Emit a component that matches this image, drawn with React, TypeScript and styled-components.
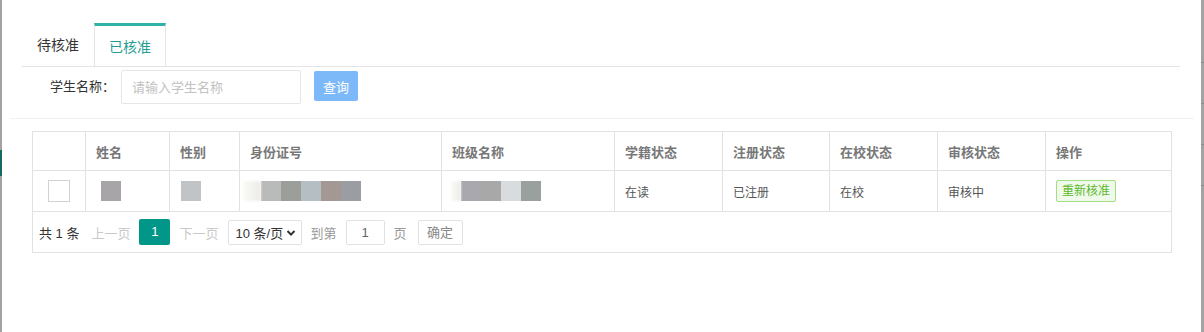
import React from 'react';
import styled, { createGlobalStyle } from 'styled-components';

const GlobalStyle = createGlobalStyle`
  html, body {
    margin: 0;
    padding: 0;
    background: #fff;
  }
  body {
    font-family: 'Liberation Sans', 'Noto Sans CJK SC', sans-serif;
    color: #333;
  }
  * {
    box-sizing: border-box;
  }
`;

interface Student {
  name: string[];
  gender: string[];
  idCard: string[];
  className: string[];
  enrollStatus: string;
  registerStatus: string;
  schoolStatus: string;
  auditStatus: string;
}

const columns = ['', '姓名', '性别', '身份证号', '班级名称', '学籍状态', '注册状态', '在校状态', '审核状态', '操作'];

const students: Student[] = [
  {
    name: ['#a8a5a9'],
    gender: ['#c0c4c6'],
    idCard: ['#b9bbba', '#9c9f99', '#b4bec3', '#a39893', '#9a9da1'],
    className: ['#a9a8ae', '#a8a8a8', '#d9dcde', '#9aa09e'],
    enrollStatus: '在读',
    registerStatus: '已注册',
    schoolStatus: '在校',
    auditStatus: '审核中',
  },
];

const Redacted = ({ colors, lead = 0, offset = 0 }: { colors: string[]; lead?: number; offset?: number }) => {
  return (
    <BlockGroup $offset={offset}>
      {lead > 0 && <FadedBlock $width={lead} />}
      {colors.map((c, i) => (
        <Block key={i} $color={c} />
      ))}
    </BlockGroup>
  );
};

const ChevronDown = () => (
  <svg width="10" height="8" viewBox="0 0 10 8">
    <path d="M1.5 2 L5 5.6 L8.5 2" fill="none" stroke="#333" strokeWidth="2" />
  </svg>
);

const App = () => {
  return (
    <Page>
      <GlobalStyle />
      <LeftRail>
        <RailMark />
      </LeftRail>
      <Content>
        <TabBar>
          <Tab>待核准</Tab>
          <Tab $active>已核准</Tab>
        </TabBar>
        <SearchRow>
          <SearchLabel>学生名称：</SearchLabel>
          <SearchInput placeholder="请输入学生名称" />
          <QueryButton>查询</QueryButton>
        </SearchRow>
        <Divider />
        <TableBox>
          <HeadRow>
            {columns.map((c, i) => (
              <HeadCell key={i}>{c}</HeadCell>
            ))}
          </HeadRow>
          {students.map((s, i) => (
            <BodyRow key={i}>
              <CheckCell>
                <CheckBox />
              </CheckCell>
              <BodyCell>
                <Redacted colors={s.name} offset={5} />
              </BodyCell>
              <BodyCell>
                <Redacted colors={s.gender} offset={1} />
              </BodyCell>
              <BodyCell>
                <Redacted colors={s.idCard} lead={18} offset={-7} />
              </BodyCell>
              <BodyCell>
                <Redacted colors={s.className} lead={10} offset={-1} />
              </BodyCell>
              <BodyCell>{s.enrollStatus}</BodyCell>
              <BodyCell>{s.registerStatus}</BodyCell>
              <BodyCell>{s.schoolStatus}</BodyCell>
              <BodyCell>{s.auditStatus}</BodyCell>
              <BodyCell>
                <ReApproveTag>重新核准</ReApproveTag>
              </BodyCell>
            </BodyRow>
          ))}
          <Pager>
            <PagerCount>共 1 条</PagerCount>
            <PagerLink>上一页</PagerLink>
            <PageCurrent>1</PageCurrent>
            <PagerLink>下一页</PagerLink>
            <PageSizeSelect>
              <span>10 条/页</span>
              <ChevronDown />
            </PageSizeSelect>
            <PagerText>到第</PagerText>
            <JumpInput>1</JumpInput>
            <PagerText>页</PagerText>
            <JumpButton>确定</JumpButton>
          </Pager>
        </TableBox>
      </Content>
      <ScrollTrack>
        <ScrollTick />
        <ScrollTick />
        <ScrollTick />
        <ScrollTick />
      </ScrollTrack>
    </Page>
  );
};

const Page = styled.div`
  display: flex;
  width: 1204px;
  height: 332px;
  overflow: hidden;
  background: #fff;
`;

const LeftRail = styled.div`
  flex: 0 0 1px;
  background: #a2a2a2;
  display: flex;
  flex-direction: column;
`;

const RailMark = styled.div`
  width: 2px;
  height: 26px;
  margin-top: 150px;
  background: #126a62;
`;

const Content = styled.div`
  flex: 1;
  display: flex;
  flex-direction: column;
  min-width: 0;
`;

const TabBar = styled.div`
  display: flex;
  margin: 23px 21px 0 20px;
  height: 44px;
  border-bottom: 1px solid #e4e4e4;
`;

const Tab = styled.div<{ $active?: boolean }>`
  height: 43px;
  padding: 0 ${({ $active }) => ($active ? 14 : 15)}px;
  border-top: 3px solid ${({ $active }) => ($active ? '#2fb2a7' : 'transparent')};
  border-left: ${({ $active }) => ($active ? '1px solid #e4e4e4' : 'none')};
  border-right: ${({ $active }) => ($active ? '1px solid #e4e4e4' : 'none')};
  line-height: ${({ $active }) => ($active ? 42 : 38)}px;
  font-size: 14px;
  color: ${({ $active }) => ($active ? '#1f9d93' : '#333')};
  cursor: pointer;
`;

const SearchRow = styled.div`
  display: flex;
  align-items: flex-start;
  height: 51px;
  padding: 3px 0 0 48px;
`;

const SearchLabel = styled.label`
  width: 71px;
  height: 34px;
  line-height: 34px;
  font-size: 13px;
  color: #333;
`;

const SearchInput = styled.input`
  width: 180px;
  height: 34px;
  border: 1px solid #e6e6e6;
  border-radius: 2px;
  padding: 0 10px;
  font-family: inherit;
  font-size: 13px;
  color: #333;
  outline: none;

  &::placeholder {
    color: #c2c2c2;
  }
`;

const QueryButton = styled.button`
  margin: 1px 0 0 13px;
  width: 44px;
  height: 30px;
  border: none;
  border-radius: 2px;
  background: #7db9f8;
  color: #fff;
  font-family: inherit;
  font-size: 13px;
  padding: 0;
`;

const Divider = styled.div`
  height: 1px;
  margin: 0 7px 0 8px;
  background: #f1f1f1;
`;

const TableBox = styled.div`
  margin: 12px 0 0 30px;
  width: 1140px;
  border: 1px solid #e2e2e2;
`;

const gridColumns = '53px 84px 70px 202px 173px 108px 107px 108px 108px 1fr';

const HeadRow = styled.div`
  display: grid;
  grid-template-columns: ${gridColumns};
  height: 39px;
  border-bottom: 1px solid #e2e2e2;
`;

const HeadCell = styled.div`
  display: flex;
  align-items: center;
  padding: 0 10px;
  border-right: 1px solid #e2e2e2;
  font-size: 13px;
  font-weight: 700;
  color: #777;

  &:last-child {
    border-right: none;
  }
`;

const BodyRow = styled.div`
  display: grid;
  grid-template-columns: ${gridColumns};
  height: 41px;
  border-bottom: 1px solid #e2e2e2;
`;

const BodyCell = styled.div`
  display: flex;
  align-items: center;
  padding: 0 10px;
  border-right: 1px solid #e2e2e2;
  font-size: 12px;
  color: #555;

  &:last-child {
    border-right: none;
  }
`;

const CheckCell = styled(BodyCell)`
  justify-content: center;
  padding: 0;
`;

const CheckBox = styled.span`
  width: 22px;
  height: 22px;
  border: 1px solid #d2d2d2;
  background: #fff;
`;

const BlockGroup = styled.div<{ $offset: number }>`
  display: flex;
  align-items: center;
  margin-left: ${({ $offset }) => $offset}px;
  box-shadow: 0 -8px 10px -6px rgba(255, 255, 255, 0.9);
`;

const Block = styled.span<{ $color: string }>`
  width: 20px;
  height: 20px;
  background: ${({ $color }) => $color};
`;

const FadedBlock = styled.span<{ $width: number }>`
  width: ${({ $width }) => $width}px;
  height: 20px;
  background: linear-gradient(to right, #fbfbf6, #ecebe8);
  filter: blur(1px);
`;

const ReApproveTag = styled.span`
  display: inline-block;
  height: 22px;
  line-height: 20px;
  padding: 0 5px;
  border: 1px solid #a3de83;
  border-radius: 2px;
  background: #f0faea;
  color: #5cb82e;
  font-size: 12px;
`;

const Pager = styled.div`
  display: flex;
  align-items: center;
  height: 40px;
  padding-left: 6px;
  gap: 9px;
  font-size: 13px;
`;

const PagerCount = styled.span`
  color: #333;
  margin-right: 3px;
`;

const PagerLink = styled.span`
  color: #c9c9c9;
`;

const PageCurrent = styled.span`
  width: 31px;
  height: 26px;
  line-height: 26px;
  text-align: center;
  border-radius: 2px;
  background: #009688;
  color: #fff;
`;

const PageSizeSelect = styled.div`
  display: flex;
  align-items: center;
  justify-content: space-between;
  width: 74px;
  height: 25px;
  margin-top: 1px;
  padding: 0 5px 0 7px;
  border: 1px solid #e2e2e2;
  border-radius: 2px;
  color: #333;
`;

const PagerText = styled.span`
  color: #999;
`;

const JumpInput = styled.span`
  width: 39px;
  height: 25px;
  line-height: 23px;
  text-align: center;
  border: 1px solid #e2e2e2;
  border-radius: 2px;
  color: #666;
`;

const JumpButton = styled.span`
  width: 45px;
  height: 25px;
  line-height: 23px;
  text-align: center;
  margin-left: 2px;
  border: 1px solid #e2e2e2;
  border-radius: 2px;
  color: #888;
`;

const ScrollTrack = styled.div`
  flex: 0 0 3px;
  background: #a3a3a3;
  display: flex;
  flex-direction: column;
  gap: 40px;
  padding-top: 62px;
`;

const ScrollTick = styled.div`
  height: 1px;
  background: #8c8c8c;
`;

export default App;
